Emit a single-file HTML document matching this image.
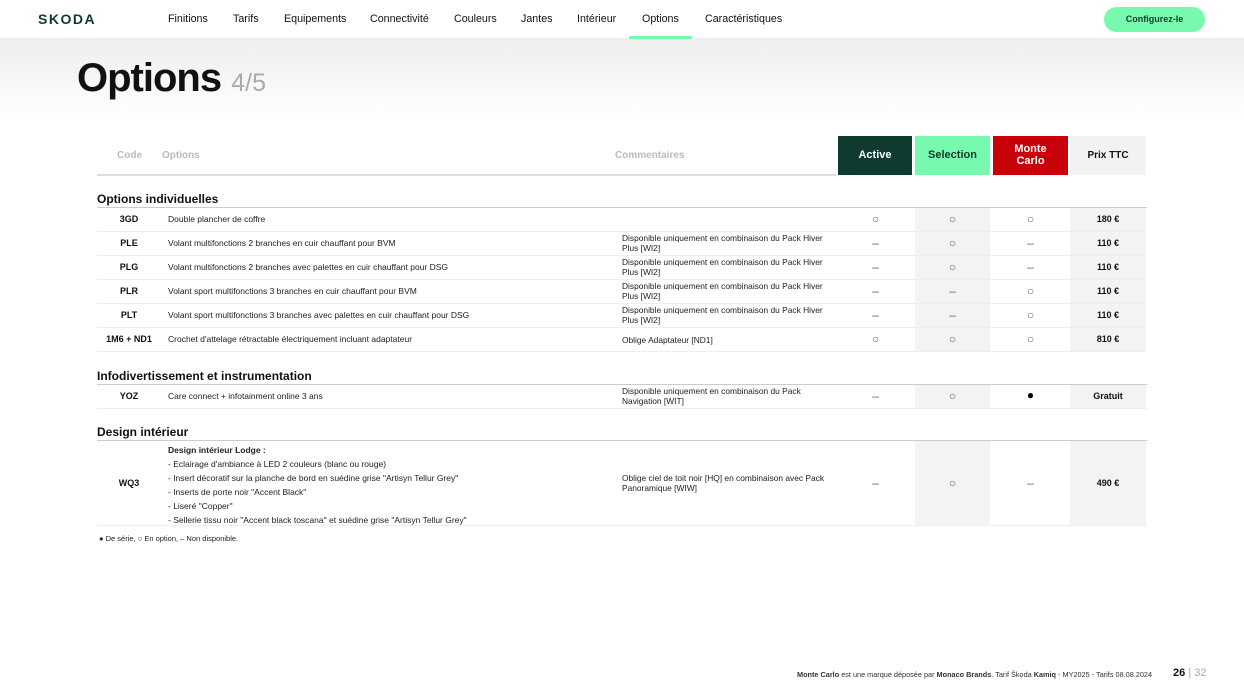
<!DOCTYPE html>
<html><head><meta charset="utf-8">
<style>
*{margin:0;padding:0;box-sizing:border-box}
body{width:1244px;height:700px;overflow:hidden;background:#fff;font-family:"Liberation Sans",sans-serif;color:#111;position:relative}
.a{position:absolute}
.nav{top:0;left:0;width:1244px;height:39px;background:#fff;border-bottom:1px solid #eee}
.nav span{position:absolute;top:13px;font-size:10.7px;color:#111}
.band{top:39px;left:0;width:1244px;height:80px;background:linear-gradient(#eeeeee,#ffffff)}
.sec{left:97px;font-size:12px;font-weight:bold}
.ln{left:97px;width:1050px;height:1px;background:#ccc}
.rl{left:97px;width:1050px;height:1px;background:#eee}
.code{left:97px;width:64px;text-align:center;font-size:9px;font-weight:bold}
.opt{left:168px;font-size:8.5px;color:#222}
.com{left:622px;width:215px;font-size:8.4px;line-height:10px;color:#222}
.s{width:75px;text-align:center;font-size:12px;line-height:12px;color:#666}
.p{left:1070px;width:76px;text-align:center;font-size:9px;font-weight:bold}
.gb{background:#f3f3f3}
.hl{font-size:10px;font-weight:bold;color:#bbb}
</style></head><body>
<div class="a nav">
<div class="a" style="left:38px;top:11px;font-size:14px;font-weight:bold;letter-spacing:1.5px;color:#0e3a2f">SKODA</div>
<span style="left:168px">Finitions</span>
<span style="left:233px">Tarifs</span>
<span style="left:284px">Equipements</span>
<span style="left:370px">Connectivité</span>
<span style="left:454px">Couleurs</span>
<span style="left:521px">Jantes</span>
<span style="left:577px">Intérieur</span>
<span style="left:642px">Options</span>
<span style="left:705px">Caractéristiques</span>
<div class="a" style="left:629px;top:36px;width:63px;height:3px;background:#78faae"></div>
<div class="a" style="left:1104px;top:7px;width:101px;height:25px;border-radius:13px;background:#78faae;font-size:9px;font-weight:bold;color:#0e3a2f;text-align:center;line-height:25px">Configurez-le</div>
</div>
<div class="a band"></div>
<div class="a" style="left:77px;top:56px;font-size:40px;font-weight:bold;letter-spacing:-1px">Options <span style="font-size:25px;font-weight:normal;color:#aaa;letter-spacing:0">4/5</span></div>

<div class="a gb" style="left:915px;top:208px;width:75px;height:144px"></div>
<div class="a gb" style="left:1070px;top:208px;width:76px;height:144px"></div>
<div class="a gb" style="left:915px;top:385px;width:75px;height:24px"></div>
<div class="a gb" style="left:1070px;top:385px;width:76px;height:24px"></div>
<div class="a gb" style="left:915px;top:441px;width:75px;height:84px"></div>
<div class="a gb" style="left:1070px;top:441px;width:76px;height:84px"></div>

<div class="a hl" style="left:117px;top:150px">Code</div>
<div class="a hl" style="left:162px;top:150px">Options</div>
<div class="a hl" style="left:615px;top:150px">Commentaires</div>
<div class="a" style="left:97px;top:174px;width:739px;height:2px;background:#ddd"></div>
<div class="a" style="left:838px;top:136px;width:74px;height:39px;background:#0e3a2f;color:#fff;font-size:11px;font-weight:bold;text-align:center;line-height:39px">Active</div>
<div class="a" style="left:915px;top:136px;width:75px;height:39px;background:#78faae;color:#0e3a2f;font-size:11px;font-weight:bold;text-align:center;line-height:39px">Selection</div>
<div class="a" style="left:993px;top:136px;width:75px;height:39px;background:#c8000a;color:#fff;font-size:11px;font-weight:bold;text-align:center;line-height:12px;padding-top:7px">Monte<br>Carlo</div>
<div class="a" style="left:1070px;top:136px;width:76px;height:39px;background:#f2f2f2;color:#111;font-size:10px;font-weight:bold;text-align:center;line-height:39px">Prix TTC</div>

<div class="a sec" style="top:192px">Options individuelles</div>
<div class="a ln" style="top:207px"></div>

<div class="a code" style="top:214px">3GD</div><div class="a opt" style="top:214px">Double plancher de coffre</div>
<div class="a s" style="left:838px;top:213px">○</div><div class="a s" style="left:915px;top:213px">○</div><div class="a s" style="left:993px;top:213px">○</div><div class="a p" style="top:214px">180 €</div>
<div class="a rl" style="top:231px"></div>

<div class="a code" style="top:238px">PLE</div><div class="a opt" style="top:238px">Volant multifonctions 2 branches en cuir chauffant pour BVM</div>
<div class="a com" style="top:233px">Disponible uniquement en combinaison du Pack Hiver Plus [WI2]</div>
<div class="a s" style="left:838px;top:237px">–</div><div class="a s" style="left:915px;top:237px">○</div><div class="a s" style="left:993px;top:237px">–</div><div class="a p" style="top:238px">110 €</div>
<div class="a rl" style="top:255px"></div>

<div class="a code" style="top:262px">PLG</div><div class="a opt" style="top:262px">Volant multifonctions 2 branches avec palettes en cuir chauffant pour DSG</div>
<div class="a com" style="top:257px">Disponible uniquement en combinaison du Pack Hiver Plus [WI2]</div>
<div class="a s" style="left:838px;top:261px">–</div><div class="a s" style="left:915px;top:261px">○</div><div class="a s" style="left:993px;top:261px">–</div><div class="a p" style="top:262px">110 €</div>
<div class="a rl" style="top:279px"></div>

<div class="a code" style="top:286px">PLR</div><div class="a opt" style="top:286px">Volant sport multifonctions 3 branches en cuir chauffant pour BVM</div>
<div class="a com" style="top:281px">Disponible uniquement en combinaison du Pack Hiver Plus [WI2]</div>
<div class="a s" style="left:838px;top:285px">–</div><div class="a s" style="left:915px;top:285px">–</div><div class="a s" style="left:993px;top:285px">○</div><div class="a p" style="top:286px">110 €</div>
<div class="a rl" style="top:303px"></div>

<div class="a code" style="top:310px">PLT</div><div class="a opt" style="top:310px">Volant sport multifonctions 3 branches avec palettes en cuir chauffant pour DSG</div>
<div class="a com" style="top:305px">Disponible uniquement en combinaison du Pack Hiver Plus [WI2]</div>
<div class="a s" style="left:838px;top:309px">–</div><div class="a s" style="left:915px;top:309px">–</div><div class="a s" style="left:993px;top:309px">○</div><div class="a p" style="top:310px">110 €</div>
<div class="a rl" style="top:327px"></div>

<div class="a code" style="top:334px">1M6 + ND1</div><div class="a opt" style="top:334px">Crochet d'attelage rétractable électriquement incluant adaptateur</div>
<div class="a com" style="top:335px">Oblige Adaptateur [ND1]</div>
<div class="a s" style="left:838px;top:333px">○</div><div class="a s" style="left:915px;top:333px">○</div><div class="a s" style="left:993px;top:333px">○</div><div class="a p" style="top:334px">810 €</div>
<div class="a rl" style="top:351px"></div>

<div class="a sec" style="top:369px">Infodivertissement et instrumentation</div>
<div class="a ln" style="top:384px"></div>
<div class="a code" style="top:391px">YOZ</div><div class="a opt" style="top:391px">Care connect + infotainment online 3 ans</div>
<div class="a com" style="top:386px">Disponible uniquement en combinaison du Pack Navigation [WIT]</div>
<div class="a s" style="left:838px;top:390px">–</div><div class="a s" style="left:915px;top:390px">○</div><div class="a s" style="left:993px;top:389px;color:#000">●</div><div class="a p" style="top:391px">Gratuit</div>
<div class="a rl" style="top:408px"></div>

<div class="a sec" style="top:425px">Design intérieur</div>
<div class="a ln" style="top:440px"></div>
<div class="a code" style="top:478px">WQ3</div>
<div class="a opt" style="top:443px;line-height:14px"><b>Design intérieur Lodge :</b><br>- Eclairage d'ambiance à LED 2 couleurs (blanc ou rouge)<br>- Insert décoratif sur la planche de bord en suédine grise "Artisyn Tellur Grey"<br>- Inserts de porte noir "Accent Black"<br>- Liseré "Copper"<br>- Sellerie tissu noir "Accent black toscana" et suédine grise "Artisyn Tellur Grey"</div>
<div class="a com" style="top:473px">Oblige ciel de toit noir [HQ] en combinaison avec Pack Panoramique [WIW]</div>
<div class="a s" style="left:838px;top:477px">–</div><div class="a s" style="left:915px;top:477px">○</div><div class="a s" style="left:993px;top:477px">–</div><div class="a p" style="top:478px">490 €</div>
<div class="a rl" style="top:525px"></div>

<div class="a" style="left:99px;top:534px;font-size:7.5px;color:#222">● De série, ○ En option, – Non disponible.</div>

<div class="a" style="left:797px;top:670px;font-size:7.3px;color:#333"><b>Monte Carlo</b> est une marque déposée par <b>Monaco Brands</b>. Tarif Škoda <b>Kamiq</b> - MY2025 - Tarifs 08.08.2024</div>
<div class="a" style="left:1173px;top:667px;font-size:11px;color:#111"><b>26</b> <span style="color:#aaa">| 32</span></div>
</body></html>
